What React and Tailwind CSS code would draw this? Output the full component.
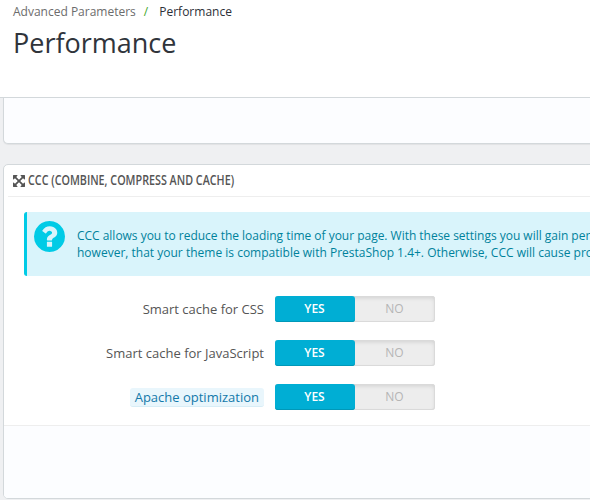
function ExpandIcon() {
  return (
    <svg viewBox="128 128 1536 1536" className="size-3 shrink-0 fill-[#555]">
      <path d="M1411 541l-355 355 355 355 144-144q29-31 70-14 39 17 39 59v448q0 26-19 45t-45 19h-448q-42 0-59-40-17-39 14-69l144-144-355-355-355 355 144 144q31 30 14 69-17 40-59 40h-448q-26 0-45-19t-19-45v-448q0-42 40-59 39-17 69 14l144 144 355-355-355-355-144 144q-19 19-45 19-12 0-24-5-40-17-40-59v-448q0-26 19-45t45-19h448q42 0 59 40 17 39-14 69l-144 144 355 355 355-355-144-144q-31-30-14-69 17-40 59-40h448q26 0 45 19t19 45v448q0 42-39 59-13 5-25 5-26 0-45-19z" />
    </svg>
  );
}

function QuestionIcon() {
  return (
    <svg viewBox="128 128 1536 1536" className="mt-[9px] ml-[7px] size-[31px] shrink-0 fill-[#00cbe6]">
      <path d="M1024 1376v-192q0-14-9-23t-23-9h-192q-14 0-23 9t-9 23v192q0 14 9 23t23 9h192q14 0 23-9t9-23zM1280 704q0-88-55.500-163t-138.500-116-170-41q-243 0-371 213-15 24 8 42l132 100q7 6 19 6 16 0 25-12 53-68 86-92 34-24 86-24 48 0 85.500 26t37.500 59q0 38-20 61t-68 45q-63 28-115.500 86.500t-52.500 125.500v36q0 14 9 23t23 9h192q14 0 23-9t9-23q0-19 21.500-49.500t54.500-49.500q32-18 49-28.500t46-35 44.500-48 28-60.500 12.500-81zM1664 896q0 209-103 385.500t-279.500 279.500-385.500 103-385.500-103-279.500-279.500-103-385.500 103-385.500 279.500-279.500 385.500-103 385.500 103 279.500 279.500 103 385.500z" />
    </svg>
  );
}

function Switch() {
  return (
    <div className="flex h-[26px] w-40 rounded-[3px] bg-[#ededed] text-center text-xs leading-[26px] shadow-[inset_0_0_0_1px_#dadada,inset_0_2px_4px_rgba(0,0,0,0.12)]">
      <span className="w-20 rounded-[3px] bg-[#00aed4] pr-px font-semibold text-white shadow-[inset_0_-1px_0_#0098b8]">YES</span>
      <span className="w-20 pr-px text-[#b5b5b5]">NO</span>
    </div>
  );
}

function Row({ label, hint }) {
  return (
    <div className="flex h-[26px] items-center">
      <div className="flex w-[260px] justify-end">
        {hint ? (
          <span className="h-[19px] rounded-[3px] border-b border-[#d7edf6] bg-[#e9f6fc] px-[5px] leading-[18px] whitespace-nowrap text-[#1279aa]">{label}</span>
        ) : (
          <span className="pt-0.5 whitespace-nowrap">{label}</span>
        )}
      </div>
      <div className="ml-[11px]"><Switch /></div>
    </div>
  );
}

export default function App() {
  return (
    <div className="h-[500px] w-[590px] overflow-hidden bg-[#eff0f2] font-['Open_Sans',sans-serif] text-[13px] text-[#555]">
      <header className="h-[98px] border-b border-[#d3d8db] bg-white pl-[13px]">
        <nav className="flex h-[22px] text-xs leading-[23px]">
          <span className="text-[#6c6c6c]">Advanced Parameters</span>
          <span className="ml-2 text-[#43a82c]">/</span>
          <span className="ml-[11px] text-[#2c3038]">Performance</span>
        </nav>
        <h1 className="text-[27px] leading-[41px] text-[#30343b]">Performance</h1>
      </header>
      <div className="ml-[3px] h-[46px] w-[640px] rounded-b-[5px] border border-t-0 border-[#d3d8db] bg-[#fcfdff] shadow-[0_1px_1px_rgba(0,0,0,0.06)]" />
      <section className="mt-5 ml-[3px] flex h-[335px] w-[700px] flex-col overflow-hidden rounded-[5px] border border-[#d3d8db] bg-white">
        <div className="ml-1 flex h-8 items-center gap-[3px] border-b border-[#eee] pl-[5px]">
          <ExpandIcon />
          <h3 className="w-[207px] origin-left scale-x-[0.768] pb-0.5 text-sm font-semibold whitespace-nowrap text-[#555]">CCC (COMBINE, COMPRESS AND CACHE)</h3>
        </div>
        <div className="mt-[15px] ml-5 flex h-16 rounded-[3px] border-l-[3px] border-[#00cbe6] bg-[#d9f4fb]">
          <QuestionIcon />
          <p className="mt-[15px] ml-3 text-xs leading-[17px] whitespace-nowrap text-[#00829b]">
            <span className="tracking-[-0.02px]">CCC allows you to reduce the loading time of your page. With these settings you will gain per</span>
            <br />
            <span className="tracking-[0.005px]">however, that your theme is compatible with PrestaShop 1.4+. Otherwise, CCC will cause pro</span>
          </p>
        </div>
        <div className="mt-5 flex flex-col gap-[18px]">
          <Row label="Smart cache for CSS" />
          <Row label="Smart cache for JavaScript" />
          <Row label="Apache optimization" hint />
        </div>
        <footer className="mt-[15px] flex-1 border-t border-[#eee] bg-[#fcfdff]" />
      </section>
    </div>
  );
}
